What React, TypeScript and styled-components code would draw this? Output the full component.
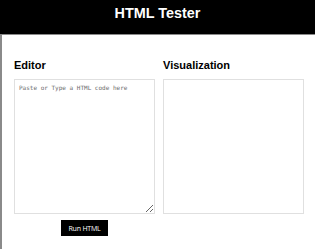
import React from 'react'
import styled, { createGlobalStyle } from 'styled-components'

const GlobalStyle = createGlobalStyle`
  body {
    margin: 0;
    background: #fff;
    font-family: "Liberation Sans", Arial, sans-serif;
  }
`

const Header = styled.header`
  height: 35px;
  box-sizing: border-box;
  padding-bottom: 8px;
  background: #000;
  border-bottom: 1px solid #8a8a8a;
  display: flex;
  align-items: center;
  justify-content: center;
  h1 {
    margin: 0;
    color: #fff;
    font-size: 14.4px;
    font-weight: bold;
  }
`

const Main = styled.main`
  border-left: 2px solid #8a8a8a;
  min-height: 214px;
  box-sizing: border-box;
  padding: 24px 11px 0 12px;
  display: grid;
  grid-template-columns: 141px 141px;
  column-gap: 8px;
`

const Column = styled.section`
  display: flex;
  flex-direction: column;
`

const Label = styled.h2`
  margin: 0 0 7px;
  font-size: 11px;
  font-weight: bold;
  color: #000;
  line-height: 13px;
`

const Editor = styled.textarea`
  box-sizing: border-box;
  width: 141px;
  height: 135px;
  border: 1px solid #e0e0e0;
  padding: 4px;
  font-family: "DejaVu Sans Mono", monospace;
  font-size: 6px;
  line-height: 8px;
  resize: vertical;
  outline: none;
  &::placeholder {
    color: #6e6e6e;
  }
`

const Preview = styled.div`
  box-sizing: border-box;
  width: 141px;
  height: 135px;
  border: 1px solid #e0e0e0;
`

const RunButton = styled.button`
  align-self: center;
  margin-top: 6px;
  width: 47px;
  height: 16px;
  padding: 0;
  background: #000;
  color: #fff;
  border: none;
  font-family: "Open Sans", sans-serif;
  font-size: 7px;
  letter-spacing: -0.2px;
`

export default function App() {
  return (
    <>
      <GlobalStyle />
      <Header>
        <h1>HTML Tester</h1>
      </Header>
      <Main>
        <Column>
          <Label>Editor</Label>
          <Editor placeholder="Paste or Type a HTML code here" />
          <RunButton>Run HTML</RunButton>
        </Column>
        <Column>
          <Label>Visualization</Label>
          <Preview />
        </Column>
      </Main>
    </>
  )
}
